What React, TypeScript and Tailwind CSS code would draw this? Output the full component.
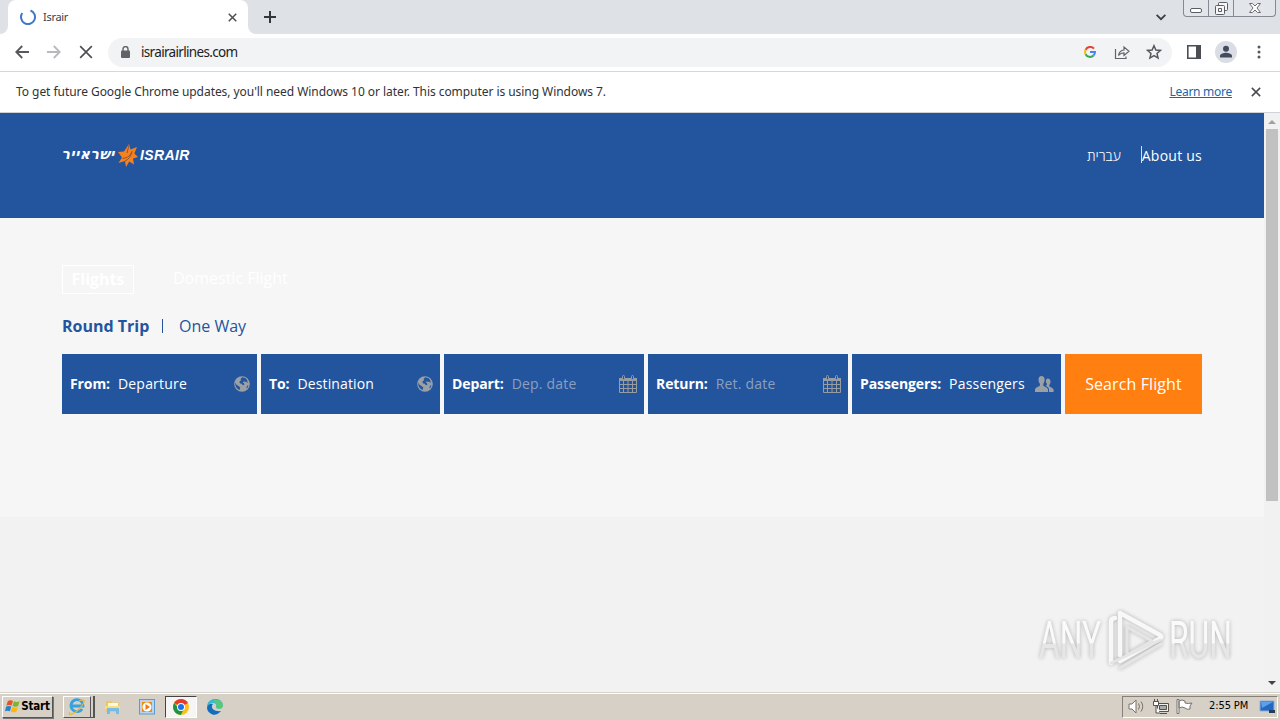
import type { ReactNode } from 'react'

// ─── constants ────────────────────────────────────────────────────────
const FIELDS = [
  { label: 'From:', value: 'Departure', icon: 'globe', width: 'w-[195px]', tone: 'tracking-[0.2px]' },
  { label: 'To:', value: 'Destination', icon: 'globe', width: 'w-[179px]', tone: 'tracking-[0.12px]' },
  { label: 'Depart:', value: 'Dep. date', icon: 'calendar', width: 'w-[200px]', tone: 'tracking-[0.2px] text-[#8c9fbd]' },
  { label: 'Return:', value: 'Ret. date', icon: 'calendar', width: 'w-[200px]', tone: 'tracking-[0.2px] text-[#8c9fbd]' },
  { label: 'Passengers:', value: 'Passengers', icon: 'people', width: 'w-[209px]', tone: 'tracking-[0.2px]' },
]

// ─── icons ────────────────────────────────────────────────────────────
function Cross({ size, width = 1.8 }: { size: number; width?: number }) {
  return (
    <svg width={size} height={size} viewBox="0 0 12 12" fill="none" stroke="#4b4e52" strokeWidth={width}>
      <path d="M1 1 11 11M11 1 1 11" />
    </svg>
  )
}

function Arrow({ color, flip = false }: { color: string; flip?: boolean }) {
  return (
    <svg width="14" height="14" viewBox="0 0 14 14" fill="none" stroke={color} strokeWidth="1.8" className={flip ? 'rotate-180' : ''}>
      <path d="M14 7H1.5M7.2 1 1.3 7l5.9 6" />
    </svg>
  )
}

function FieldIcon({ name }: { name: string }) {
  if (name === 'globe') {
    return (
      <svg width="16" height="16" viewBox="0 0 16 16">
        <circle cx="8" cy="8" r="7.8" fill="#9ba0a5" />
        <path d="M8.2 1.2 6.5 3l.8 1-1.8 1.6.2 1.7 2 .5 1.2 1.4 1.5-.4-.5-1.7-1.2-.5 1-1.3 1.6.7 1.1-.4.6 1.2.8-.4-.7-2.4L11.4 2z M1.3 6.8l1.2 2 2 1.2 1.8 1.6-.9 2.7-2.6-2.2C1.5 10.600 1 8.500 1.300 6.800z M13 9.700l1.500-.4-1.100 2.800-1 .4z" fill="#23559e" />
      </svg>
    )
  }
  if (name === 'calendar') {
    return (
      <svg width="18" height="18" viewBox="0 0 18 18">
        <path d="M.5 3.500h17v14H.5z" fill="none" stroke="#989da2" />
        <path d="M0 3h18v3H0z" fill="#989da2" />
        <path d="M.5 9.500h17M.5 13.500h17M4.500 6v11.500M9 6v11.500M13.500 6v11.500" stroke="#989da2" />
        <rect x="3.500" y=".5" width="2" height="4" rx="1" fill="#23559e" stroke="#989da2" />
        <rect x="12.500" y=".5" width="2" height="4" rx="1" fill="#23559e" stroke="#989da2" />
      </svg>
    )
  }
  return (
    <svg width="19" height="16" viewBox="0 0 19 16" fill="#9ba0a5">
      <path d="M6.500 0C4.600 0 3.500 1.400 3.500 3.500c0 2 .6 3.500 1.400 4.300v1.700c0 .8-4.900 2-4.900 4V16h13v-2.500c0-2-4.700-3.200-4.700-4V7.800c.8-.8 1.300-2.300 1.300-4.300C9.600 1.400 8.400 0 6.500 0z" />
      <path d="M12.400 2.500c1.900-.2 3.100 1 3.100 3.100 0 1.700-.6 2.700-1.200 3.400v1.300c0 .7 4.300 1.700 4.300 3.600V16H14v-2.700c0-1.800-2-2.700-3.200-3.400l1-.9V7.600c-.5-.6-.9-1.300-.9-2.400 0-1.300.5-2.300 1.500-2.700z" />
    </svg>
  )
}

function ChromeLogo() {
  return (
    <svg width="16" height="16" viewBox="0 0 16 16">
      <circle cx="8" cy="8" r="8" fill="#fbc116" />
      <path d="M8 8 1.100 4A8 8 0 0 1 14.900 4z" fill="#e33b2e" />
      <path d="M8 8H4.500L1.100 4A8 8 0 0 0 7.700 16l3.400-6z" fill="#229342" />
      <circle cx="8" cy="8" r="4" fill="#fff" />
      <circle cx="8" cy="8" r="3" fill="#1a73e8" />
    </svg>
  )
}

// ─── browser chrome ───────────────────────────────────────────────────
function TabStrip() {
  return (
    <div className="flex h-[34px] bg-[#dee1e6]">
      <div className="w-2 bg-white"><div className="h-full rounded-br-lg bg-[#dee1e6]" /></div>
      <div className="flex h-full w-[240px] items-center rounded-t-lg bg-white pl-3 pr-[11px]">
        <svg width="16" height="16" viewBox="0 0 16 16" fill="none" stroke="#3f78c9" strokeWidth="2">
          <path d="M10.500 1.500A7 7 0 1 1 2.300 4" />
        </svg>
        <span className="ml-[7px] flex-1 text-[11px] tracking-[-0.3px] text-[#3c4043]">Israir</span>
        <Cross size={9} width={2} />
      </div>
      <div className="w-2 bg-white"><div className="h-full rounded-bl-lg bg-[#dee1e6]" /></div>
      <svg className="ml-2 mt-[11px]" width="12" height="12" viewBox="0 0 12 12" stroke="#33363a" strokeWidth="2">
        <path d="M0 6h12M6 0v12" />
      </svg>
      <div className="flex flex-1 justify-end">
        <svg className="mr-[17px] mt-3.5" width="10" height="7" viewBox="0 0 10 7" fill="none" stroke="#3c4043" strokeWidth="1.800">
          <path d="m.6.8 4.400 4.400L9.400.8" />
        </svg>
        <div className="mr-1 flex h-[17px] w-[93px] rounded-b border border-t-0 border-[#858991] bg-[#e2e5ea]">
          <div className="flex w-[25px] justify-center border-r border-[#858991] pt-2">
            <svg width="12" height="5" viewBox="0 0 12 5"><rect x=".5" y=".5" width="11" height="4" rx="1.500" fill="#fff" stroke="#5a5d63" /></svg>
          </div>
          <div className="flex w-[25px] justify-center border-r border-[#858991] pt-0.5">
            <svg width="13" height="13" viewBox="0 0 13 13" fill="#f6f6f6" stroke="#5a5d63">
              <rect x="3.500" y=".5" width="9" height="8" rx="1" />
              <rect x=".5" y="3.500" width="9" height="9" rx="1" />
              <path d="M3.500 6.500h3v3h-3z" />
            </svg>
          </div>
          <div className="flex flex-1 justify-center pt-[3px]">
            <svg width="12" height="10" viewBox="0 0 12 10" fill="#fff" stroke="#5a5d63" strokeWidth=".9">
              <path d="M.5.5h3L6 3 8.500.5h3L8 5l3.500 4.500h-3L6 7 3.500 9.500h-3L4 5z" />
            </svg>
          </div>
        </div>
      </div>
    </div>
  )
}

function Toolbar() {
  return (
    <div className="flex h-[38px] items-center border-b border-[#d5d7da] bg-white pb-px pl-[15px]">
      <Arrow color="#55585c" />
      <span className="ml-[18px]"><Arrow color="#b7b9bc" flip /></span>
      <span className="ml-[18px]"><Cross size={14} width={1.4} /></span>
      <div className="ml-[15px] flex h-[29px] w-[1064px] items-center rounded-full bg-[#f1f3f4] pl-[13px] pr-[10px]">
        <svg width="9" height="12" viewBox="0 0 9 12">
          <path d="M2 5V3a2.500 2.500 0 0 1 5 0v2" fill="none" stroke="#5f6368" strokeWidth="1.400" />
          <rect y="4.500" width="9" height="7.500" rx="1" fill="#5f6368" />
        </svg>
        <span className="ml-[11px] flex-1 pt-px text-[13.5px] tracking-[-0.67px] text-[#202124]">israirairlines.com</span>
        <svg width="12" height="12" viewBox="0 0 12 12" fill="none" strokeWidth="2">
          <path d="M10 2.700A5 5 0 0 0 1.600 3.800" stroke="#ea4335" />
          <path d="M1.600 3.800a5 5 0 0 0 0 4.400" stroke="#fbbc05" />
          <path d="M1.600 8.200A5 5 0 0 0 9.500 9.500" stroke="#34a853" />
          <path d="M9.500 9.500A5 5 0 0 0 11 6H6" stroke="#4285f4" />
        </svg>
        <svg className="ml-[18px]" width="16" height="15" viewBox="0 0 16 15" fill="none" stroke="#606469" strokeWidth="1.200">
          <path d="M1.500 4v9.500h10.500V11.500" />
          <path d="M4.500 10.500C5 7 7 5.200 10 5V2l5 4.300-5 4.200V7.800c-2.300 0-4 .7-5.500 2.700z" />
        </svg>
        <svg className="ml-4" width="16" height="16" viewBox="0 0 24 24" fill="none" stroke="#54575c" strokeWidth="2.200">
          <path d="m12 2.500 2.800 6.500 7 .6-5.300 4.600 1.600 6.900-6.100-3.700-6.100 3.700 1.600-6.900-5.300-4.600 7-.6z" />
        </svg>
      </div>
      <svg className="ml-[15px]" width="14" height="14" viewBox="0 0 14 14">
        <path d="M.8.8h12.400v12.400H.8z" fill="none" stroke="#4b4e52" strokeWidth="1.600" />
        <path d="M9 1h4.500v12H9z" fill="#4b4e52" />
      </svg>
      <svg className="ml-3.5" width="22" height="22" viewBox="0 0 22 22">
        <circle cx="11" cy="11" r="11" fill="#dadde3" />
        <circle cx="11" cy="7.800" r="3" fill="#414c61" />
        <path d="M5 16.500v-1.700c0-2 4-3 6-3s6 1 6 3v1.700z" fill="#414c61" />
      </svg>
      <svg className="ml-5" width="4" height="14" viewBox="0 0 4 14" fill="#55585c">
        <circle cx="2" cy="2" r="1.500" /><circle cx="2" cy="7" r="1.500" /><circle cx="2" cy="12" r="1.500" />
      </svg>
    </div>
  )
}

function InfoBar() {
  return (
    <div className="flex h-[41px] items-center border-b border-[#cfd2d6] bg-white pl-4 pr-[19px] text-[12px] text-[#303236]">
      <span className="flex-1 whitespace-nowrap tracking-[-0.053px]">
        To get future Google Chrome updates, you'll need Windows 10 or later. This computer is using Windows 7.
      </span>
      <a className="mr-[19px] tracking-[-0.27px] text-[#1967a8] underline">Learn more</a>
      <Cross size={10} width={1.900} />
    </div>
  )
}

// ─── page ─────────────────────────────────────────────────────────────
function IsrairLogo() {
  return (
    <div className="flex h-6 w-[128px] items-center justify-between font-bold italic leading-none text-white">
      <span dir="rtl" className="w-[53px] whitespace-nowrap pb-0.5 font-['DejaVu_Sans'] text-[14px] tracking-[0.5px]">ישראייר</span>
      <svg width="20" height="23" viewBox="0 0 20 23">
        <path d="m11 0 1.500 5.500L19 3l-2.700 6.500L20 13l-5 1.500 1 6-4.800-3L8 23l-1-6-6.500 2L4 13.500 0 8l6-.5z" fill="#f58220" />
        <path d="M4.500 14.500c5.500-.7 8-3 9.500-7-1 5-3.500 8-7 9.500M11 1 9 9" stroke="#874f3b" strokeWidth=".9" fill="none" />
      </svg>
      <span className="w-[50px] whitespace-nowrap font-['Liberation_Sans'] text-[14px] tracking-[0.4px]">ISRAIR</span>
    </div>
  )
}

function Page() {
  return (
    <main className="w-[1264px] bg-[#f2f2f2] font-['Open_Sans','Noto_Sans',sans-serif]">
      <header className="flex h-[105px] justify-between bg-[#23559e] px-[62px] pt-[30px]">
        <IsrairLogo />
        <nav className="flex h-6 items-center text-[14px] text-white">
          <a dir="rtl" className="mr-5 text-[14px] font-light">עברית</a>
          <span className="mb-0.5 h-[17px] w-px bg-white/80" />
          <a className="tracking-[0.24px]">About us</a>
        </nav>
      </header>

      <section className="h-[299px] bg-[#f6f6f6] px-[62px] pt-[47px]">
        <div className="flex h-[29px] items-center text-[16px] text-white">
          <span className="flex h-[29px] w-[72px] items-center justify-center border border-white pb-0.5 font-bold">Flights</span>
          <span className="ml-[39px] pb-[3px]">Domestic Flight</span>
        </div>
        <div className="mt-5 flex h-6 items-center text-[16px] text-[#23559e]">
          <span className="w-[87px] whitespace-nowrap font-bold">Round Trip</span>
          <span className="ml-[13px] h-3.5 w-px bg-[#23559e]" />
          <span className="ml-4">One Way</span>
        </div>
        <form className="mt-4 flex h-[60px] gap-1">
          {FIELDS.map((field) => (
            <label key={field.label} className={`flex items-center bg-[#23559e] pl-2 pr-[7px] text-[14px] text-white ${field.width}`}>
              <b className="pb-0.5 font-bold tracking-[-0.1px]">{field.label}</b>
              <span className={`ml-2 flex-1 whitespace-nowrap pb-0.5 ${field.tone}`}>{field.value}</span>
              <FieldIcon name={field.icon} />
            </label>
          ))}
          <button type="button" className="w-[137px] whitespace-nowrap bg-[#ff7f11] text-[16px] tracking-[0.1px] text-white">Search Flight</button>
        </form>
      </section>
    </main>
  )
}

function Scrollbar() {
  return (
    <aside className="flex w-4 flex-col items-center bg-[#f1f1f1]">
      <svg className="mt-1.5" width="8" height="5" viewBox="0 0 8 5"><path d="M0 5 4 1l4 4z" fill="#a0a0a0" /></svg>
      <div className="mt-[5px] h-[372px] w-3 bg-[#c1c1c1]" />
      <svg className="mb-1.5 mt-auto" width="8" height="5" viewBox="0 0 8 5"><path d="M0 0h8L4 4z" fill="#444" /></svg>
    </aside>
  )
}

function Watermark() {
  return (
    <div className="absolute left-[1038px] top-[607px] h-[68px] w-[200px] opacity-90 drop-shadow-[0_0_2px_rgba(0,0,0,0.3)]">
      <svg width="200" height="68" viewBox="0 0 200 68" className="overflow-visible">
        <defs>
          <linearGradient id="sheen" x1="0" y1="0" x2="0" y2="1">
            <stop offset=".54" stopColor="#fbfbfb" />
            <stop offset=".56" stopColor="#e5e5e5" />
          </linearGradient>
        </defs>
        <g fill="url(#sheen)" fontFamily="Roboto, sans-serif" fontSize="51">
          <text x="1" y="51" textLength="62" lengthAdjust="spacingAndGlyphs">ANY</text>
          <text x="131" y="51" textLength="63" lengthAdjust="spacingAndGlyphs">RUN</text>
        </g>
        <g fill="none" strokeWidth="4.500" strokeLinejoin="round" strokeLinecap="round">
          <path d="M73 56V15q0-4 4-4M82 48V6l40 22q3 2-1 4L82 54" stroke="#f9f9f9" />
          <path d="M89 20v28l25-14zM73 56l49-23M82 61l41-24" stroke="#e4e4e4" strokeWidth="3" />
        </g>
      </svg>
    </div>
  )
}

// ─── taskbar ──────────────────────────────────────────────────────────
function TaskSlot({ children, className }: { children: ReactNode; className: string }) {
  return <div className={`flex h-[22px] items-center justify-center ${className}`}>{children}</div>
}

function WindowsFlag() {
  return (
    <svg width="16" height="15" viewBox="0 0 17 16">
      <path d="M3 2q3-1.500 5.500 0L7 7Q4.500 5.700 1.500 7z" fill="#e8531f" />
      <path d="M9.500 2.500q3 1.500 6 0L14 7.500q-3 1.500-6 0z" fill="#7eb52b" />
      <path d="M1.200 8q3-1.200 5.500 0L5.200 13Q3 11.800 0 13z" fill="#2783c8" />
      <path d="M7.700 8.500q3 1.400 6 0l-1.500 5q-3 1.500-6 0z" fill="#fbb812" />
    </svg>
  )
}

function Taskbar() {
  return (
    <footer className="flex h-7 items-center border-t border-[#d5d2cc] bg-[#d6d0c7] font-['DejaVu_Sans_Condensed',sans-serif] shadow-[inset_0_1px_0_#fff]">
      <TaskSlot className="ml-0.5 w-[51px] border border-b-[#555] border-l-white border-r-[#555] border-t-white text-[11.5px] font-bold tracking-[-0.15px] text-black shadow-[1px_1px_0_#777]">
        <WindowsFlag />Start
      </TaskSlot>
      <TaskSlot className="ml-2.5 w-[28px] border border-b-[#555] border-l-white border-r-[#555] border-t-white">
        <svg width="18" height="17" viewBox="0 0 18 17" fill="none">
          <path d="M14 11A6 6 0 1 1 15 8H4" stroke="#36a2df" strokeWidth="2.800" />
          <path d="M2 14C-1 19 7 16 13 9c4-5 5-9-2-6" stroke="#e7b73b" strokeWidth="1.200" />
        </svg>
      </TaskSlot>
      <div className="h-[22px] w-1 border-b border-r-2 border-[#555]" />
      <TaskSlot className="ml-2.5 w-4">
        <svg width="16" height="16" viewBox="0 0 16 16">
          <path d="M1 2h5l1 1.500h7V13H1z" fill="#e9c763" />
          <path d="M3 4h10v4H3z" fill="#fff7d5" />
          <path d="M0 7h15v3H0z" fill="#f6dd87" />
          <path d="M2 9h12v6h-3v-3H5v3H2z" fill="#76bce5" />
        </svg>
      </TaskSlot>
      <TaskSlot className="ml-[18px] w-4">
        <svg width="16" height="16" viewBox="0 0 16 16">
          <rect x=".5" y=".5" width="15" height="14.500" fill="#b9d4ec" stroke="#5c9bcd" />
          <path d="M3 3h10v10H3z" fill="#f18a15" />
          <circle cx="8" cy="8" r="4.500" fill="#fff" />
          <path d="m6.500 5 4.500 3-4.500 3z" fill="#ed7a10" />
        </svg>
      </TaskSlot>
      <TaskSlot className="ml-2.5 w-8 border border-b-white border-l-[#444] border-r-white border-t-[#444] bg-[#f6f5f3]"><ChromeLogo /></TaskSlot>
      <TaskSlot className="ml-2.5 w-4">
        <svg width="16" height="16" viewBox="0 0 16 16">
          <path d="M0 8C0-2 15-3 16 6c0 5-7 4-7 2 1-2 0-4-3-4-3 0-5 2-6 4z" fill="#35b8cf" />
          <path d="M9 1c5 0 7 3 7 6-1 4-7 3-7 1 2-3-1-6-5-5 1-1 3-2 5-2z" fill="#58c878" />
          <path d="M0 8c1-3 4-4 6-3-3 3 0 8 8 7-3 4-8 5-11 2-2-1-3-3-3-6z" fill="#126dbd" />
        </svg>
      </TaskSlot>
      <div className="ml-auto mr-0.5 flex h-[22px] w-[156px] items-center border border-b-white border-l-[#858078] border-r-white border-t-[#858078] pl-[5px] text-[11px] text-black">
        <svg width="17" height="15" viewBox="0 0 17 15" fill="none" stroke="#77736d">
          <path d="M1 5h3l4-4v13l-4-4H1z" fill="#fff" />
          <path d="M10.500 4.500q2 3 0 6M13 2.500q3.500 5 0 10" />
        </svg>
        <svg className="ml-2" width="16" height="15" viewBox="0 0 16 15" stroke="#55514b">
          <path d="M4.500 4.500h11v8h-11z" fill="#eee" />
          <path d="M6.500 6.500h7v4h-7z" fill="#aaa" />
          <path d="M.5 2.500h5v4h-5zM1.500 0v2M4.500 0v2M3 7v7h4M7 14.500h7" fill="#fff" />
        </svg>
        <svg className="ml-[7px]" width="17" height="15" viewBox="0 0 17 15" stroke="#77736d" fill="#fff">
          <path d="M1 .5h2v14H1zM3 2q3-2 6 0v2q3 1 7 0-3 3-2 6-3 1-5-1-3-2-6 0z" />
        </svg>
        <span className="ml-4 whitespace-nowrap tracking-[-0.1px]">2:55 PM</span>
        <svg className="ml-auto mr-px" width="17" height="14" viewBox="0 0 17 14">
          <path d="M1 1h14v10H1z" fill="#2169c5" stroke="#8dafd7" />
          <path d="M2 2h12L3 8z" fill="#5da0e9" />
          <path d="M10 10h6v3h-6z" fill="#263c56" />
        </svg>
      </div>
    </footer>
  )
}

// ─── screen ───────────────────────────────────────────────────────────
export default function App() {
  return (
    <div className="relative flex h-[720px] w-[1280px] flex-col overflow-hidden bg-white font-['Noto_Sans',sans-serif]">
      <TabStrip />
      <Toolbar />
      <InfoBar />
      <div className="flex h-[579px]">
        <Page />
        <Scrollbar />
      </div>
      <Taskbar />
      <Watermark />
    </div>
  )
}
